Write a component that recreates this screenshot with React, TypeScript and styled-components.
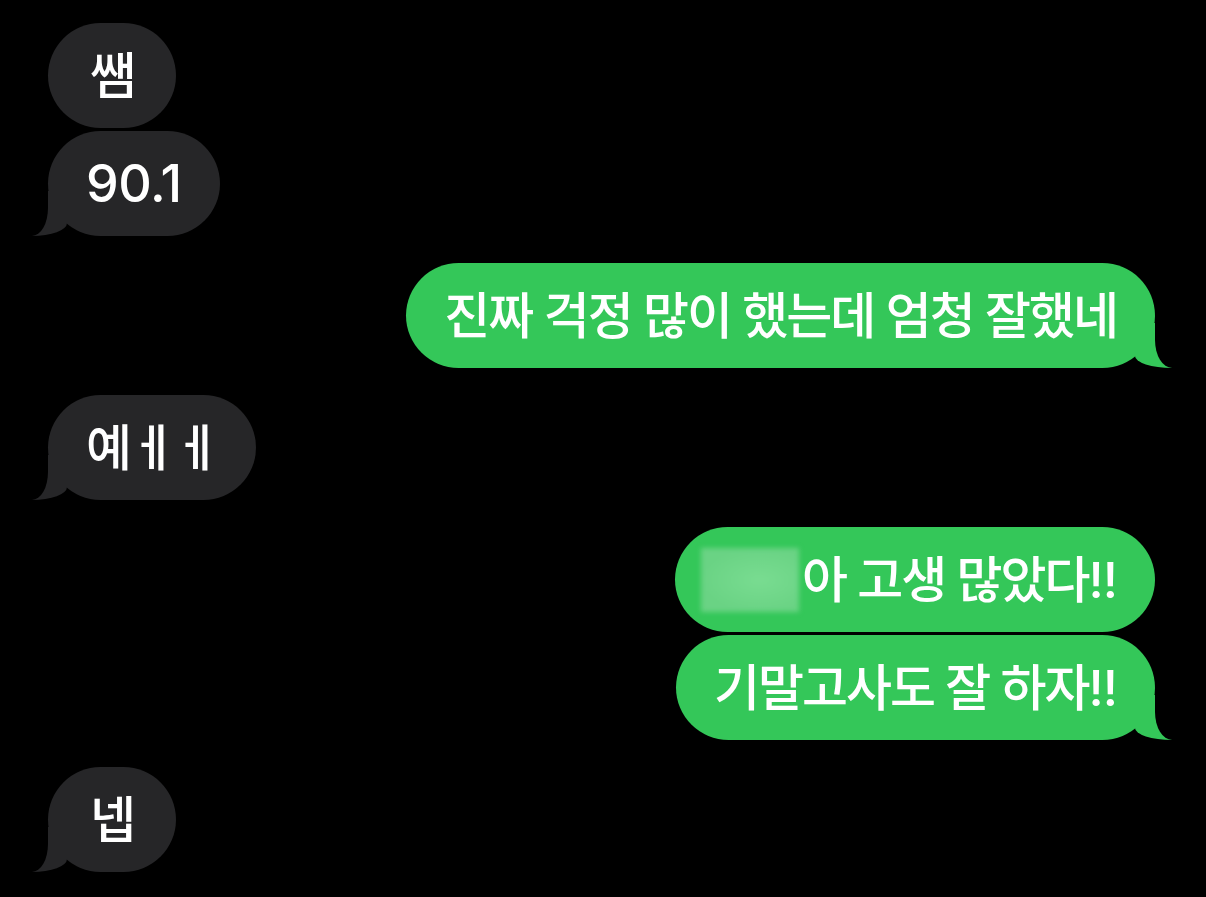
import styled, { createGlobalStyle, css } from "styled-components";

type Side = "them" | "me";

type Message = {
  side: Side;
  text: React.ReactNode;
  tail?: boolean;
  gap: number;
};

/*
=========== STYLES =================
*/
const GlobalStyle = createGlobalStyle`
  html, body {
    margin: 0;
    padding: 0;
    background: #000;
  }
  body {
    font-family: "Inter", "Noto Sans CJK KR", sans-serif;
    -webkit-font-smoothing: antialiased;
  }
`;

const colors = {
  them: "#262628",
  me: "#34c759",
};

const Thread = styled.main`
  display: flex;
  flex-direction: column;
  width: 1206px;
  height: 897px;
  box-sizing: border-box;
  padding: 23px 51px 0 48px;
  background: #000;
  overflow: hidden;
`;

const tailThem = css`
  &::before {
    content: "";
    position: absolute;
    bottom: 0;
    left: -16px;
    width: 35px;
    height: 45px;
    background: ${colors.them};
    border-bottom-right-radius: 35px 13px;
  }
  &::after {
    content: "";
    position: absolute;
    bottom: 0;
    left: -40px;
    width: 40px;
    height: 46px;
    background: #000;
    border-bottom-right-radius: 16px 28px;
  }
`;

const tailMe = css`
  &::before {
    content: "";
    position: absolute;
    bottom: 0;
    right: -17px;
    width: 37px;
    height: 45px;
    background: ${colors.me};
    border-bottom-left-radius: 37px 12px;
  }
  &::after {
    content: "";
    position: absolute;
    bottom: 0;
    right: -40px;
    width: 40px;
    height: 46px;
    background: #000;
    border-bottom-left-radius: 17px 28px;
  }
`;

const Bubble = styled.div<{ $side: Side; $tail: boolean; $gap: number }>`
  position: relative;
  display: flex;
  align-items: center;
  justify-content: center;
  box-sizing: border-box;
  height: 105px;
  min-width: 128px;
  margin-top: ${(p) => p.$gap}px;
  padding: 0 38px;
  border-radius: 53px;
  align-self: ${(p) => (p.$side === "me" ? "flex-end" : "flex-start")};
  background: ${(p) => colors[p.$side]};
  color: #fff;
  font-size: 50px;
  font-weight: 500;
  letter-spacing: -2px;
  line-height: 1;
  white-space: nowrap;

  ${(p) => p.$tail && (p.$side === "me" ? tailMe : tailThem)}
`;

const Num = styled.span`
  font-size: 52px;
  font-weight: 500;
  letter-spacing: -0.5px;
`;

const Bang = styled.span`
  font-size: 50px;
  letter-spacing: -1px;
`;

const Blurred = styled.span`
  display: inline-block;
  width: 98px;
  height: 64px;
  margin-left: -12px;
  margin-right: 3px;
  background: radial-gradient(ellipse at 60% 50%, #79dc91 0%, #6ad384 70%);
  filter: blur(2.5px);
`;

const messages: Message[] = [
  { side: "them", text: "쌤", gap: 0 },
  { side: "them", text: <Num>90.1</Num>, tail: true, gap: 3 },
  {
    side: "me",
    text: "진짜 걱정 많이 했는데 엄청 잘했네",
    tail: true,
    gap: 27,
  },
  { side: "them", text: "예ㅔㅔ", tail: true, gap: 27 },
  {
    side: "me",
    text: (
      <>
        <Blurred aria-label='이름 가림' />아 고생 많았다<Bang>!!</Bang>
      </>
    ),
    gap: 27,
  },
  {
    side: "me",
    text: (
      <>
        기말고사도 잘 하자<Bang>!!</Bang>
      </>
    ),
    tail: true,
    gap: 3,
  },
  { side: "them", text: "넵", tail: true, gap: 27 },
];

export default function App() {
  return (
    <>
      <GlobalStyle />
      <Thread>
        {messages.map((m, i) => (
          <Bubble key={i} $side={m.side} $tail={!!m.tail} $gap={m.gap}>
            {m.text}
          </Bubble>
        ))}
      </Thread>
    </>
  );
}
